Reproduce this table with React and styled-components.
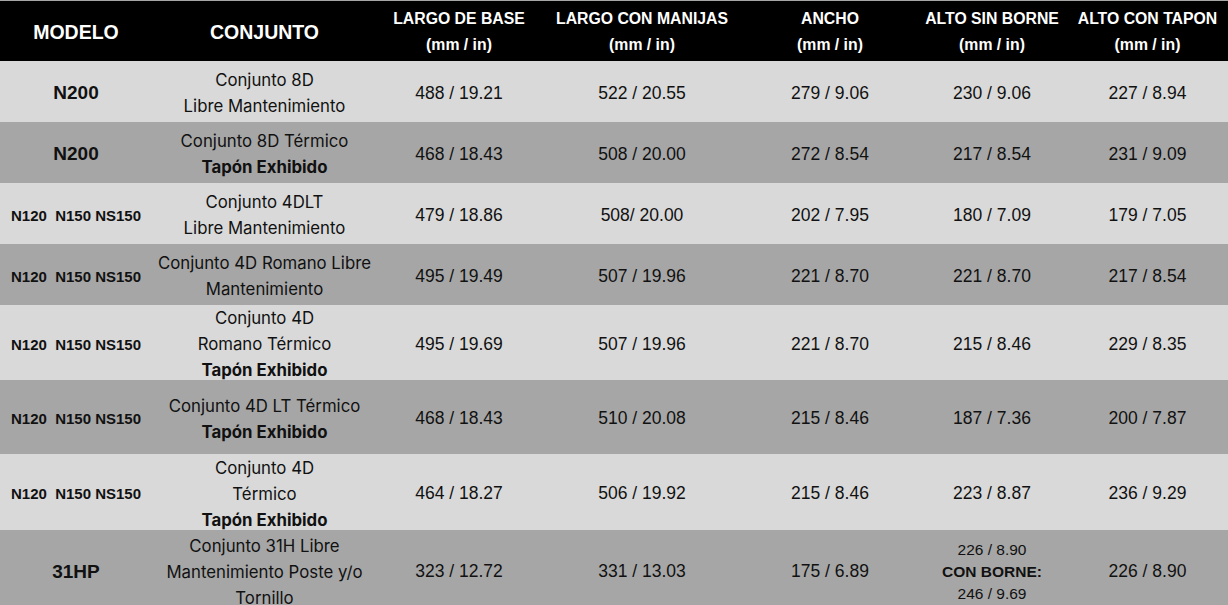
import React from "react";
import styled, { createGlobalStyle } from "styled-components";

const Global = createGlobalStyle`
  html, body { margin: 0; padding: 0; overflow: hidden; background: #ffffff; }
  body { font-family: "Liberation Sans", Arial, sans-serif; }
`;

const Table = styled.div`
  display: grid;
  grid-template-columns: 152px 225px 164px 202px 174px 150px 161px;
  width: 1228px;
  border-top: 1px solid #a6a6a6;
`;

const HeadCell = styled.div`
  height: 60px;
  padding-top: 2px;
  box-sizing: border-box;
  background: #000;
  color: #fff;
  display: flex;
  flex-direction: column;
  align-items: center;
  justify-content: center;
  text-align: center;
  font-family: "Liberation Sans", Arial, sans-serif;
  font-weight: 700;
  font-size: ${(p) => (p.$big ? "19.5px" : "15.8px")};
  line-height: 26px;
  white-space: nowrap;
`;

const Cell = styled.div`
  height: ${(p) => p.$h}px;
  padding-top: 3px;
  box-sizing: border-box;
  background: ${(p) => (p.$dark ? "#a6a6a6" : "#d9d9d9")};
  color: #111;
  display: flex;
  flex-direction: column;
  align-items: center;
  justify-content: center;
  text-align: center;
  white-space: nowrap;
  overflow: visible;
`;

const ModelBig = styled.span`
  font-family: "Liberation Sans", Arial, sans-serif;
  font-weight: 700;
  font-size: 19px;
`;

const ModelMulti = styled.span`
  font-family: "Liberation Sans", Arial, sans-serif;
  font-weight: 700;
  font-size: 15px;
  white-space: pre;
`;

const TextLine = styled.span`
  font-family: Inter, "Noto Sans", sans-serif;
  font-size: 16.8px;
  line-height: 26px;
  font-weight: ${(p) => (p.$bold ? 700 : 400)};
`;

const Num = styled.span`
  font-family: "Liberation Sans", Arial, sans-serif;
  font-size: 17.5px;
`;

const SmallNum = styled.span`
  font-family: "Liberation Sans", Arial, sans-serif;
  font-size: 15.5px;
  line-height: 22px;
  font-weight: ${(p) => (p.$bold ? 700 : 400)};
`;

const headers = [
  { lines: ["MODELO"], big: true },
  { lines: ["CONJUNTO"], big: true },
  { lines: ["LARGO DE BASE", "(mm / in)"] },
  { lines: ["LARGO CON MANIJAS", "(mm / in)"] },
  { lines: ["ANCHO", "(mm / in)"] },
  { lines: ["ALTO SIN BORNE", "(mm / in)"] },
  { lines: ["ALTO CON TAPON", "(mm / in)"] },
];

const MULTI = "N120  N150 NS150";

const rows = [
  { h: 61, model: "N200", big: true, conj: [["Conjunto 8D"], ["Libre Mantenimiento"]], v: ["488 / 19.21", "522 / 20.55", "279 / 9.06", "230 / 9.06", "227 / 8.94"] },
  { h: 61, model: "N200", big: true, conj: [["Conjunto 8D Térmico"], ["Tapón Exhibido", true]], v: ["468 / 18.43", "508 / 20.00", "272 / 8.54", "217 / 8.54", "231 / 9.09"] },
  { h: 61, model: MULTI, conj: [["Conjunto 4DLT"], ["Libre Mantenimiento"]], v: ["479 / 18.86", "508/ 20.00", "202 / 7.95", "180 / 7.09", "179 / 7.05"] },
  { h: 61, model: MULTI, conj: [["Conjunto 4D Romano Libre"], ["Mantenimiento"]], v: ["495 / 19.49", "507 / 19.96", "221 / 8.70", "221 / 8.70", "217 / 8.54"] },
  { h: 75, model: MULTI, conj: [["Conjunto 4D"], ["Romano Térmico"], ["Tapón Exhibido", true]], v: ["495 / 19.69", "507 / 19.96", "221 / 8.70", "215 / 8.46", "229 / 8.35"] },
  { h: 74, model: MULTI, conj: [["Conjunto 4D LT Térmico"], ["Tapón Exhibido", true]], v: ["468 / 18.43", "510 / 20.08", "215 / 8.46", "187 / 7.36", "200 / 7.87"] },
  { h: 76, model: MULTI, conj: [["Conjunto 4D"], ["Térmico"], ["Tapón Exhibido", true]], v: ["464 / 18.27", "506 / 19.92", "215 / 8.46", "223 / 8.87", "236 / 9.29"] },
  { h: 80, model: "31HP", big: true, conj: [["Conjunto 31H Libre"], ["Mantenimiento Poste y/o"], ["Tornillo"]], v: ["323 / 12.72", "331 / 13.03", "175 / 6.89", { stack: [["226 / 8.90"], ["CON BORNE:", true], ["246 / 9.69"]] }, "226 / 8.90"] },
];

export default function App() {
  return (
    <>
      <Global />
      <Table>
        {headers.map((h, i) => (
          <HeadCell key={"h" + i} $big={h.big}>
            {h.lines.map((l) => (
              <span key={l}>{l}</span>
            ))}
          </HeadCell>
        ))}
        {rows.map((r, ri) => {
          const dark = ri % 2 === 1;
          return (
            <React.Fragment key={"r" + ri}>
              <Cell $h={r.h} $dark={dark}>
                {r.big ? <ModelBig>{r.model}</ModelBig> : <ModelMulti>{r.model}</ModelMulti>}
              </Cell>
              <Cell $h={r.h} $dark={dark}>
                {r.conj.map(([t, b], i) => (
                  <TextLine key={i} $bold={b}>{t}</TextLine>
                ))}
              </Cell>
              {r.v.map((v, vi) => (
                <Cell key={vi} $h={r.h} $dark={dark}>
                  {typeof v === "string" ? (
                    <Num>{v}</Num>
                  ) : (
                    v.stack.map(([t, b], i) => (
                      <SmallNum key={i} $bold={b}>{t}</SmallNum>
                    ))
                  )}
                </Cell>
              ))}
            </React.Fragment>
          );
        })}
      </Table>
    </>
  );
}
